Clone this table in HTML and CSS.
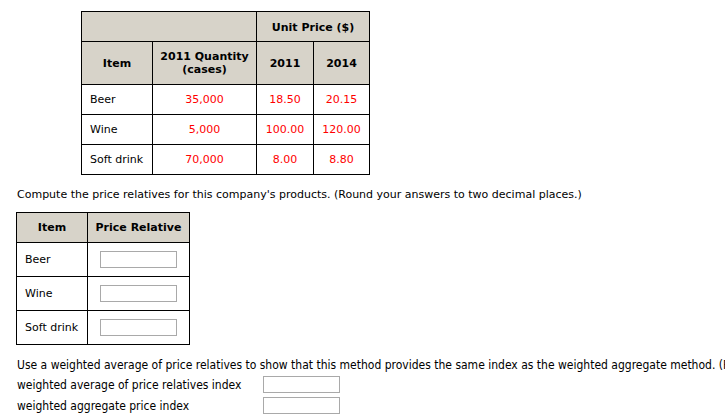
FILE: index.html
```html
<!DOCTYPE html>
<html>
<head>
<meta charset="utf-8">
<link rel="stylesheet" href="styles.css">
</head>
<body>
<div class="page">
  <div class="data-wrap">
    <table class="grid data">
      <colgroup><col class="c1"><col class="c2"><col class="c3"><col class="c4"></colgroup>
      <tr class="h1">
        <th colspan="2"></th>
        <th colspan="2">Unit Price ($)</th>
      </tr>
      <tr class="h2">
        <th>Item</th>
        <th>2011 Quantity<br>(cases)</th>
        <th>2011</th>
        <th>2014</th>
      </tr>
      <tr class="r">
        <td class="name">Beer</td>
        <td class="num">35,000</td>
        <td class="num">18.50</td>
        <td class="num">20.15</td>
      </tr>
      <tr class="r">
        <td class="name">Wine</td>
        <td class="num">5,000</td>
        <td class="num">100.00</td>
        <td class="num">120.00</td>
      </tr>
      <tr class="r">
        <td class="name">Soft drink</td>
        <td class="num">70,000</td>
        <td class="num">8.00</td>
        <td class="num">8.80</td>
      </tr>
    </table>
  </div>

  <p class="instr">Compute the price relatives for this company's products. (Round your answers to two decimal places.)</p>

  <table class="grid rel">
    <colgroup><col class="d1"><col class="d2"></colgroup>
    <tr class="h1">
      <th>Item</th>
      <th>Price Relative</th>
    </tr>
    <tr class="rr">
      <td class="name">Beer</td>
      <td class="inp"><input type="text" class="box"></td>
    </tr>
    <tr class="rr">
      <td class="name">Wine</td>
      <td class="inp"><input type="text" class="box"></td>
    </tr>
    <tr class="rr">
      <td class="name">Soft drink</td>
      <td class="inp"><input type="text" class="box"></td>
    </tr>
  </table>

  <p class="instr2">Use a weighted average of price relatives to show that this method provides the same index as the weighted aggregate method. (Round your answers to one decimal place.)</p>
  <div class="answers">
    <span class="lbl">weighted average of price relatives index</span>
    <input type="text" class="box">
    <span class="lbl">weighted aggregate price index</span>
    <input type="text" class="box">
  </div>
</div>
</body>
</html>
```

FILE: styles.css
```css
html, body {
  margin: 0;
  padding: 0;
  background: #fff;
}
body {
  font-family: "DejaVu Sans", Verdana, sans-serif;
  font-size: 11px;
  color: #000;
  overflow: hidden;
  width: 725px;
  height: 416px;
}
.page {
  padding: 0;
}
.data-wrap {
  padding: 11px 0 0 81px;
}
.grid {
  border-collapse: collapse;
  table-layout: fixed;
}
.grid th, .grid td {
  border: 1px solid #000;
  padding: 0;
}
.grid th {
  background: #d7d3c9;
  font-weight: bold;
  text-align: center;
  line-height: 13px;
}
.data {
  width: 288px;
}
.c1 { width: 71px; }
.c2 { width: 104px; }
.c3 { width: 57px; }
.c4 { width: 56px; }
.data .h1 { height: 30px; }
.data .h1 th { padding-top: 2px; }
.data .h2 { height: 43px; }
.data .r { height: 30px; }
.name {
  text-align: left;
  padding-left: 8px !important;
  white-space: nowrap;
}
.num {
  text-align: center;
  color: #f00;
}
.instr {
  margin: 13px 0 0 17px;
  line-height: 14px;
  white-space: nowrap;
}
.rel {
  width: 173px;
  margin: 10px 0 0 16px;
}
.d1 { width: 71px; }
.d2 { width: 102px; }
.rel .h1 { height: 30px; }
.rel .rr { height: 34px; }
.inp {
  text-align: center;
}
.box {
  display: block;
  box-sizing: border-box;
  width: 77px;
  height: 17px;
  margin: 0 auto;
  border: 1px solid #a9a9a9;
  padding: 0;
  background: #fff;
}
.instr2, .answers {
  font-family: "DejaVu Sans Condensed", "DejaVu Sans", sans-serif;
  font-stretch: condensed;
  font-size: 12px;
}
.instr2 {
  margin: 13px 0 0 17px;
  line-height: 14px;
  white-space: nowrap;
  overflow: hidden;
}
.answers {
  display: grid;
  grid-template-columns: 246px 77px;
  row-gap: 4px;
  align-items: center;
  margin: 4px 0 0 17px;
}
.lbl {
  line-height: 14px;
  white-space: nowrap;
}
```
